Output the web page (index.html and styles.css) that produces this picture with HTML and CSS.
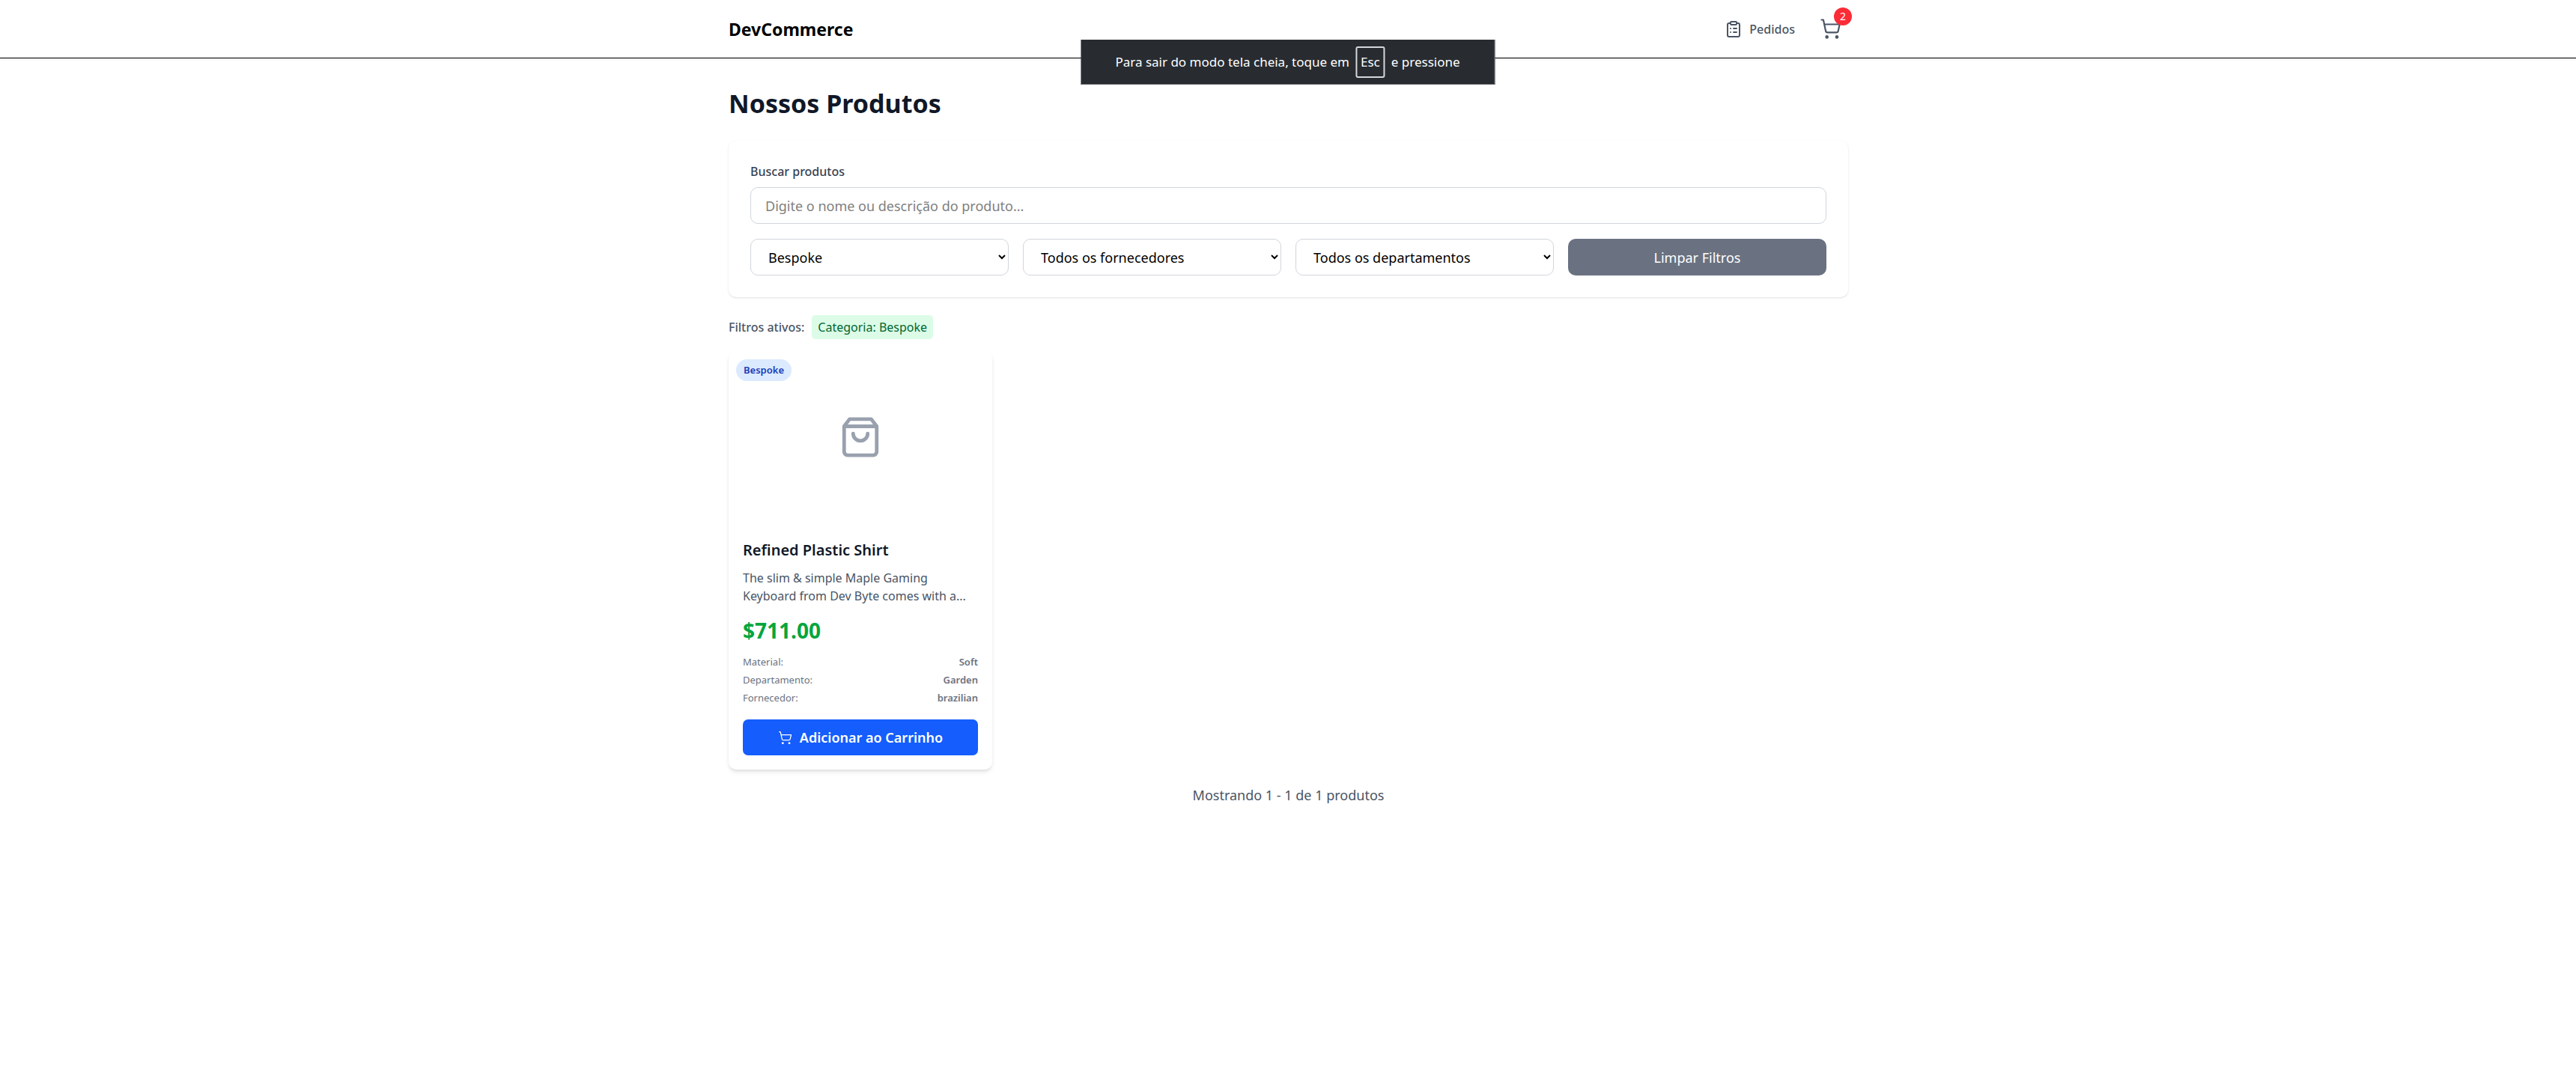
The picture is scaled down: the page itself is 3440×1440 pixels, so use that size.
FILE: index.html
```html
<!DOCTYPE html>
<html lang="pt-BR">
<head>
<meta charset="utf-8">
<meta name="viewport" content="width=device-width, initial-scale=1">
<title>DevCommerce</title>
<link rel="stylesheet" href="styles.css">
</head>
<body>
<svg class="sprite" aria-hidden="true">
  <symbol id="icon-cart" viewBox="0 0 24 24">
    <circle cx="8" cy="21" r="1"/><circle cx="19" cy="21" r="1"/>
    <path d="M2.05 2.05h2l2.66 12.42a2 2 0 0 0 2 1.58h9.78a2 2 0 0 0 1.95-1.57l1.65-7.43H5.12"/>
  </symbol>
</svg>

<header class="header">
  <div class="container header-row">
    <a class="logo" href="#">DevCommerce</a>
    <nav class="nav">
      <a class="nav-link" href="#">
        <svg class="icon icon-md" viewBox="0 0 24 24" aria-hidden="true">
          <rect x="8" y="2" width="8" height="4" rx="1"/>
          <path d="M16 4h2a2 2 0 0 1 2 2v14a2 2 0 0 1-2 2H6a2 2 0 0 1-2-2V6a2 2 0 0 1 2-2h2M12 11h4M12 16h4M8 11h.01M8 16h.01"/>
        </svg>
        Pedidos
      </a>
      <a class="cart-link" href="#" aria-label="Carrinho">
        <svg class="icon icon-lg" aria-hidden="true"><use href="#icon-cart"/></svg>
        <span class="cart-count">2</span>
      </a>
    </nav>
  </div>
</header>

<div class="toast" role="status">
  <span>Para sair do modo tela cheia, toque em</span>
  <kbd class="key">Esc</kbd>
  <span>e pressione</span>
</div>

<main class="container main">
  <h1 class="title">Nossos Produtos</h1>

  <form class="filters">
    <div class="field">
      <label class="label" for="search">Buscar produtos</label>
      <input class="control" id="search" type="text" placeholder="Digite o nome ou descrição do produto...">
    </div>
    <div class="filter-grid">
      <select class="control" aria-label="Categoria"><option>Bespoke</option></select>
      <select class="control" aria-label="Fornecedor"><option>Todos os fornecedores</option></select>
      <select class="control" aria-label="Departamento"><option>Todos os departamentos</option></select>
      <button class="clear" type="button">Limpar Filtros</button>
    </div>
  </form>

  <div class="active-filters">
    <span class="active-label">Filtros ativos:</span>
    <span class="chip">Categoria: Bespoke</span>
  </div>

  <div class="products">
    <article class="card">
      <div class="card-media">
        <span class="tag">Bespoke</span>
        <svg class="icon icon-xl" viewBox="0 0 24 24" aria-hidden="true">
          <path d="M6 2 3 6v14a2 2 0 0 0 2 2h14a2 2 0 0 0 2-2V6l-3-4ZM3 6h18M16 10a4 4 0 0 1-8 0"/>
        </svg>
      </div>
      <div class="card-body">
        <h2 class="card-title">Refined Plastic Shirt</h2>
        <p class="card-text">The slim &amp; simple Maple Gaming Keyboard from Dev Byte comes with a...</p>
        <p class="price">$711.00</p>
        <dl class="specs">
          <div class="spec"><dt>Material:</dt><dd>Soft</dd></div>
          <div class="spec"><dt>Departamento:</dt><dd>Garden</dd></div>
          <div class="spec"><dt>Fornecedor:</dt><dd>brazilian</dd></div>
        </dl>
        <button class="add" type="button">
          <svg class="icon icon-sm" aria-hidden="true"><use href="#icon-cart"/></svg>
          Adicionar ao Carrinho
        </button>
      </div>
    </article>
  </div>

  <p class="summary">Mostrando 1 - 1 de 1 produtos</p>
</main>
</body>
</html>
```
FILE: styles.css
```css
* { box-sizing: border-box; margin: 0; padding: 0; }

body {
  background: #fff;
  color: #000;
  font-family: "Noto Sans", "Open Sans", sans-serif;
  font-size: 18px;
  line-height: 28px;
}

a { color: inherit; text-decoration: none; }
button, input, select { font: inherit; }

.sprite { display: none; }

.icon {
  flex: none;
  fill: none;
  stroke: currentColor;
  stroke-width: 2;
  stroke-linecap: round;
  stroke-linejoin: round;
}
.icon-sm { width: 19px; height: 19px; stroke-width: 1.6; }
.icon-md { width: 24px; height: 24px; }
.icon-lg { width: 29px; height: 29px; stroke-width: 1.8; }
.icon-xl { width: 58px; height: 58px; color: #99a1af; }

.container {
  max-width: 1536px;
  margin: 0 auto;
  padding-inline: 21px 20px;
}

.header {
  border-bottom: 1px solid #000;
  box-shadow: 0 1px 3px rgb(0 0 0 / 10%);
}
.header-row {
  display: flex;
  align-items: center;
  justify-content: space-between;
  min-height: 77px;
}
.logo { font-size: 23px; font-weight: 700; }
.nav {
  display: flex;
  align-items: center;
  gap: 24px;
  color: #4a5565;
}
.nav-link {
  display: flex;
  align-items: center;
  gap: 9px;
  font-size: 16px;
  font-weight: 500;
}
.cart-link {
  position: relative;
  display: flex;
  padding: 9px;
}
.cart-count {
  position: absolute;
  top: -5px;
  right: -5px;
  width: 24px;
  height: 24px;
  border-radius: 50%;
  background: #fb2c36;
  color: #fff;
  font-size: 14px;
  line-height: 24px;
  text-align: center;
}

.toast {
  position: absolute;
  top: 53px;
  left: 50%;
  transform: translateX(-50%);
  display: flex;
  align-items: center;
  gap: 8px;
  height: 60px;
  padding-inline: 46px;
  border-right: 1px solid #77797c;
  border-bottom: 1px solid #55585c;
  background: #282c31;
  color: #fff;
  font-size: 17px;
  white-space: nowrap;
}
.key {
  padding: 5px;
  border: 2px solid #d5d7da;
  border-radius: 3px;
  font-family: inherit;
}

.main { padding-block: 38px; }
.title {
  margin-bottom: 28px;
  color: #101828;
  font-size: 34px;
  font-weight: 700;
  line-height: 44px;
}

.filters {
  padding: 29px;
  border-radius: 10px;
  background: #fff;
  box-shadow: 0 1px 3px rgb(0 0 0 / 10%), 0 1px 2px -1px rgb(0 0 0 / 10%);
}
.label {
  display: block;
  margin-bottom: 9px;
  color: #364153;
  font-size: 16px;
  font-weight: 500;
  line-height: 24px;
}
.control {
  display: block;
  width: 100%;
  height: 49px;
  padding-inline: 19px;
  border: 1px solid #d1d5dc;
  border-radius: 10px;
  background: #fff;
  color: #000;
}
.control::placeholder { color: #808080; opacity: 1; }
.filter-grid {
  display: grid;
  grid-template-columns: repeat(4, 1fr);
  gap: 19px;
  margin-top: 20px;
}
.clear {
  border: 0;
  border-radius: 10px;
  background: #6a7282;
  color: #fff;
}

.active-filters {
  display: flex;
  align-items: center;
  gap: 10px;
  margin-block: 24px 16px;
  font-size: 16px;
  line-height: 24px;
}
.active-label { color: #4a5565; font-weight: 500; }
.chip {
  padding: 4px 8px;
  border-radius: 5px;
  background: #dcfce7;
  color: #016630;
}

.products {
  display: grid;
  grid-template-columns: repeat(auto-fill, minmax(340px, 1fr));
  gap: 29px;
}
.card {
  border-radius: 10px;
  background: #fff;
  box-shadow: 0 4px 6px -1px rgb(0 0 0 / 10%), 0 2px 4px -2px rgb(0 0 0 / 10%);
}
.card-media {
  position: relative;
  display: grid;
  place-items: center;
  height: 230px;
}
.tag {
  position: absolute;
  top: 11px;
  left: 10px;
  padding: 4px 10px;
  border-radius: 16px;
  background: #dbeafe;
  color: #193cb8;
  font-size: 13px;
  font-weight: 600;
  line-height: 21px;
}
.card-body { padding: 19px; }
.card-title {
  margin-bottom: 8px;
  color: #101828;
  font-size: 20px;
  font-weight: 600;
  line-height: 34px;
}
.card-text {
  margin-bottom: 15px;
  color: #4a5565;
  font-size: 16px;
  line-height: 24px;
}
.price {
  margin-bottom: 14px;
  color: #00a63e;
  font-size: 28px;
  font-weight: 700;
  line-height: 38px;
}
.specs {
  display: grid;
  gap: 5px;
  margin-bottom: 19px;
  color: #6a7282;
  font-size: 13px;
  line-height: 19px;
}
.spec { display: flex; justify-content: space-between; }
.spec dd { font-weight: 600; }
.add {
  display: flex;
  align-items: center;
  justify-content: center;
  gap: 10px;
  width: 100%;
  height: 48px;
  border: 0;
  border-radius: 7px;
  background: #155dfc;
  color: #fff;
  font-weight: 600;
}

.summary {
  margin-top: 20px;
  color: #4a5565;
  text-align: center;
}
```
